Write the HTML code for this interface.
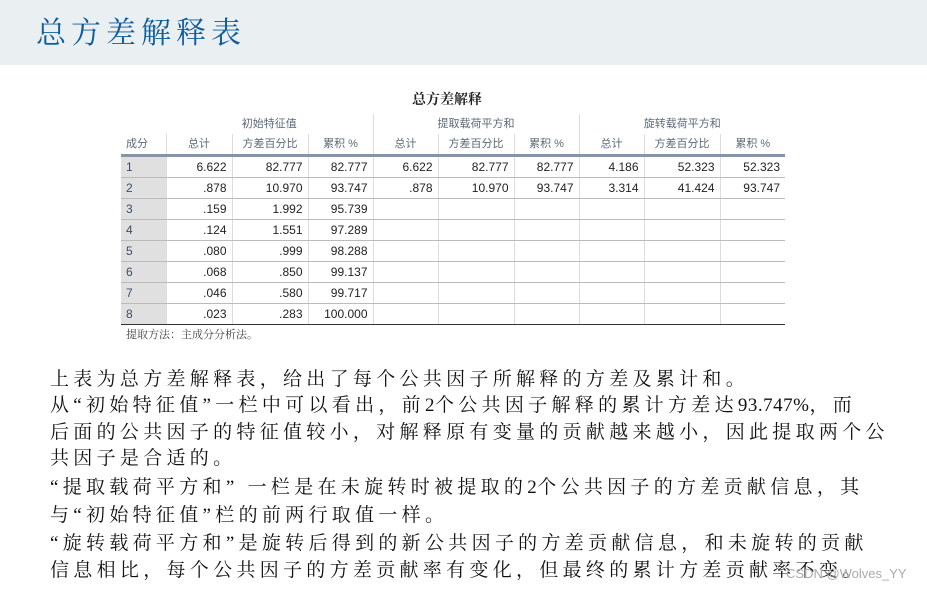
<!DOCTYPE html>
<html><head><meta charset="utf-8"><style>
body{margin:0;width:927px;height:592px;background:#fff;position:relative;overflow:hidden;font-family:"Liberation Sans","Noto Sans CJK SC",sans-serif}
.hdr{position:absolute;left:0;top:0;width:927px;height:65px;background:#eaf0f2}
.ttl{position:absolute;left:36px;top:8px;font-family:"Liberation Serif","Noto Serif CJK SC",serif;font-size:30px;color:#0f5d9e;letter-spacing:5px}
.tt{position:absolute;left:412px;top:89px;font-size:14px;font-weight:bold;color:#222;font-family:"Liberation Serif","Noto Serif CJK SC",serif}
table{position:absolute;left:121px;top:114px;border-collapse:collapse;font-size:12px;color:#222;table-layout:fixed}
td{padding:0 5px;height:20px;line-height:20px;text-align:right;border-left:1px solid #ddd;border-bottom:1px solid #bbb;white-space:nowrap}
tr.h td{color:#5a6a78;text-align:center;border-bottom:none;height:19px;font-size:11px}
tr.h2 td{border-bottom:3px solid #8595a3;height:19px}
td.n{background:#e0e0e0;text-align:left;color:#3a5068;border-left:none}
tr.last td{border-bottom:1.5px solid #333}
.ft{position:absolute;left:126px;top:326px;font-size:11px;color:#444;font-family:"Liberation Serif","Noto Serif CJK SC",serif}
.l{position:absolute;left:50px;font-family:"Liberation Serif","Noto Serif CJK SC",serif;font-size:19px;letter-spacing:4.3px;color:#111;white-space:nowrap;line-height:26px}
.l span{letter-spacing:0.5px}
.wm{position:absolute;left:786px;top:566px;font-size:13px;color:#aaa}
</style></head><body>
<div class="hdr"></div>
<div class="ttl">总方差解释表</div>
<div class="tt">总方差解释</div>
<table>
<colgroup><col style="width:45px"><col style="width:66px"><col style="width:76px"><col style="width:65px"><col style="width:65px"><col style="width:76px"><col style="width:65px"><col style="width:65px"><col style="width:76px"><col style="width:65px"></colgroup>
<tr class="h"><td style="border-left:none"></td><td colspan="3" style="border-left:none">初始特征值</td><td colspan="3">提取载荷平方和</td><td colspan="3">旋转载荷平方和</td></tr>
<tr class="h h2"><td style="border-left:none;text-align:left">成分</td><td>总计</td><td>方差百分比</td><td>累积 %</td><td>总计</td><td>方差百分比</td><td>累积 %</td><td>总计</td><td>方差百分比</td><td>累积 %</td></tr>
<tr><td class="n">1</td><td>6.622</td><td>82.777</td><td>82.777</td><td>6.622</td><td>82.777</td><td>82.777</td><td>4.186</td><td>52.323</td><td>52.323</td></tr>
<tr><td class="n">2</td><td>.878</td><td>10.970</td><td>93.747</td><td>.878</td><td>10.970</td><td>93.747</td><td>3.314</td><td>41.424</td><td>93.747</td></tr>
<tr><td class="n">3</td><td>.159</td><td>1.992</td><td>95.739</td><td></td><td></td><td></td><td></td><td></td><td></td></tr>
<tr><td class="n">4</td><td>.124</td><td>1.551</td><td>97.289</td><td></td><td></td><td></td><td></td><td></td><td></td></tr>
<tr><td class="n">5</td><td>.080</td><td>.999</td><td>98.288</td><td></td><td></td><td></td><td></td><td></td><td></td></tr>
<tr><td class="n">6</td><td>.068</td><td>.850</td><td>99.137</td><td></td><td></td><td></td><td></td><td></td><td></td></tr>
<tr><td class="n">7</td><td>.046</td><td>.580</td><td>99.717</td><td></td><td></td><td></td><td></td><td></td><td></td></tr>
<tr class="last"><td class="n">8</td><td>.023</td><td>.283</td><td>100.000</td><td></td><td></td><td></td><td></td><td></td><td></td></tr>
</table>
<div class="ft">提取方法：主成分分析法。</div>
<div class="l" style="top:367px">上表为总方差解释表，给出了每个公共因子所解释的方差及累计和。</div>
<div class="l" style="top:393px">从“初始特征值”一栏中可以看出，前<span>2</span>个公共因子解释的累计方差达<span>93.747%</span>，而</div>
<div class="l" style="top:420px">后面的公共因子的特征值较小，对解释原有变量的贡献越来越小，因此提取两个公</div>
<div class="l" style="top:446px">共因子是合适的。</div>
<div class="l" style="top:475px">“提取载荷平方和” 一栏是在未旋转时被提取的<span>2</span>个公共因子的方差贡献信息，其</div>
<div class="l" style="top:503px">与“初始特征值”栏的前两行取值一样。</div>
<div class="l" style="top:531px">“旋转载荷平方和”是旋转后得到的新公共因子的方差贡献信息，和未旋转的贡献</div>
<div class="l" style="top:558px">信息相比，每个公共因子的方差贡献率有变化，但最终的累计方差贡献率不变。</div>
<div class="wm">CSDN @Wolves_YY</div>
</body></html>
